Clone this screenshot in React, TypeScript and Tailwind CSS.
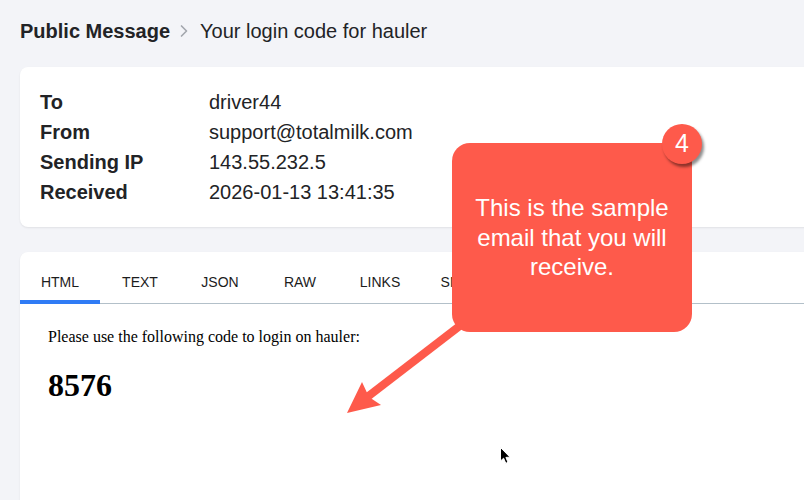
import { ChevronRight } from "lucide-react";

const rows = [
  { label: "To", value: "driver44" },
  { label: "From", value: "support@totalmilk.com" },
  { label: "Sending IP", value: "143.55.232.5" },
  { label: "Received", value: "2026-01-13 13:41:35" },
];

const tabs = ["HTML", "TEXT", "JSON", "RAW", "LINKS", "SMTP"];

function Arrow() {
  return (
    <svg className="absolute left-0 top-0 pointer-events-none" width="804" height="500" viewBox="0 0 804 500">
      <line x1="470" y1="318" x2="366" y2="398" stroke="#fe5a4b" strokeWidth="8" />
      <polygon points="347,413 362,382 369,397 381,405" fill="#fe5a4b" />
    </svg>
  );
}

function Cursor() {
  return (
    <svg className="absolute left-[499px] top-[446px]" width="14" height="20" viewBox="0 0 14 20">
      <path
        d="M1.5 1.5 L1.5 15 L4.6 12.2 L6.8 17.3 L9 16.3 L6.9 11.4 L11 11.2 Z"
        fill="#000"
        stroke="#fff"
        strokeWidth="1"
        strokeLinejoin="round"
      />
    </svg>
  );
}

export default function App() {
  return (
    <div className="relative w-[804px] h-[500px] overflow-hidden bg-[#f3f4f8] font-['Liberation_Sans',Arial,sans-serif] text-[#222326]">
      <div className="flex items-center px-5 pt-[19px] h-[43px] text-[20px] leading-6">
        <span className="font-bold">Public Message</span>
        <ChevronRight className="mx-[4px] text-[#a3a6ad]" size={20} strokeWidth={2} />
        <span className="ml-[2px]">Your login code for hauler</span>
      </div>

      <div className="mt-[24px] ml-5 w-[820px] rounded-lg bg-white py-5 pl-5 shadow-[0_1px_2px_rgba(0,0,0,0.08)]">
        {rows.map((row) => (
          <div key={row.label} className="grid grid-cols-[169px_1fr] text-[20px] leading-[30px]">
            <span className="font-bold">{row.label}</span>
            <span>{row.value}</span>
          </div>
        ))}
      </div>

      <div className="mt-[25px] ml-5 w-[820px] h-[300px] rounded-lg bg-white pt-[10px] shadow-[0_1px_2px_rgba(0,0,0,0.08)]">
        <div className="flex border-b border-[#b3c0c9]">
          {tabs.map((tab, i) => (
            <div
              key={tab}
              className={
                i === 0
                  ? "w-[80px] h-[42px] -mb-px pt-[2px] flex items-center justify-center border-b-4 border-[#2f7bf5] text-[14px] text-[#1c1c1c]"
                  : "w-[80px] h-[42px] -mb-px pt-[2px] flex items-center justify-center border-b-4 border-transparent text-[14px] text-[#1c1c1c]"
              }
            >
              {tab}
            </div>
          ))}
        </div>
        <div className="pl-[28px] pt-[24px] font-['Liberation_Serif','Times_New_Roman',serif] text-black">
          <p className="text-[16px] leading-[18px]">Please use the following code to login on hauler:</p>
          <h1 className="mt-[21px] text-[32px] leading-[37px] font-bold">8576</h1>
        </div>
      </div>

      <Arrow />

      <div className="absolute left-[452px] top-[143px] w-[240px] h-[189px] rounded-[18px] bg-[#fe5a4b] flex items-center justify-center text-center text-white text-[24px] leading-[29.5px]">
        <p>
          This is the sample
          <br />
          email that you will
          <br />
          receive.
        </p>
      </div>

      <div className="absolute left-[662px] top-[124px] w-[40px] h-[40px] rounded-full bg-[#fe5a4b] flex items-center justify-center text-white text-[25px] shadow-[2px_3px_3px_rgba(0,0,0,0.45)]">
        4
      </div>

      <Cursor />
    </div>
  );
}
